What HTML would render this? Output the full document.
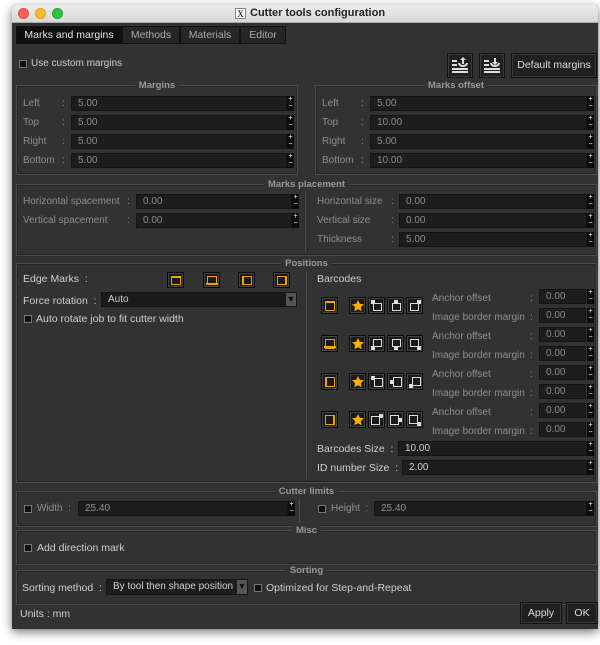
<!DOCTYPE html>
<html><head><meta charset="utf-8"><style>
*{box-sizing:border-box;margin:0;padding:0}
body{width:600px;height:645px;background:#fff;position:relative;overflow:hidden;font-family:"Liberation Sans",sans-serif;font-size:10px;color:#cfcfcf}
.win{position:absolute;left:12px;top:5px;width:586px;height:624px;background:#323232;box-shadow:0 3px 10px rgba(0,0,0,.55);border-radius:4px 4px 0 0;overflow:hidden}
.tb{position:absolute;left:0;top:0;width:586px;height:18px;background:linear-gradient(#ececec,#d8d8d8);border-bottom:1px solid #aaa}
.dot{position:absolute;top:3px;width:11px;height:11px;border-radius:50%}
.a{position:absolute;white-space:nowrap}
.g{position:absolute;border:1px solid #4c4c4c;box-shadow:inset 0 0 0 1px #262626}
.gt{position:absolute;top:-6px;left:0;right:0;text-align:center;font-weight:bold;color:#999;font-size:9.5px}
.gt span{background:#323232;padding:0 4px}
.in{position:absolute;height:15px;background:#1d1d1d;border:1px solid #141414;color:#8c8c8c;padding-left:6px;line-height:13px;font-size:10px}
.in.en{color:#d0d0d0}
.sp{position:absolute;width:7px;height:15px;background:#0c0c0c;color:#bbb;font-size:7px;line-height:7px;text-align:center;font-weight:bold}
.dl{color:#8e8e8e}
.cb{position:absolute;width:8px;height:8px;background:#111;border:1px solid #777}
.btn{position:absolute;background:#202020;border:1px solid #111;box-shadow:inset 0 0 0 1px #3a3a3a;color:#ddd;text-align:center}
.ib{position:absolute;width:17px;height:16px;background:#1a1a1a;border:1px solid #0a0a0a;box-shadow:inset 0 0 0 1px #444}
.ib svg{position:absolute;left:2px;top:2px}
.tab{position:absolute;top:21px;height:18px;background:#262626;border:1px solid #111;color:#aaa;text-align:center;line-height:16px;font-size:10.5px}
</style></head><body>
<div class="win">
<div class="tb">
<div class="dot" style="left:6px;background:#fc5f57;border:1px solid #de4a42"></div>
<div class="dot" style="left:23px;background:#fdbc2e;border:1px solid #dea224"></div>
<div class="dot" style="left:40px;background:#28c840;border:1px solid #1fa832"></div>
<div class="a" style="left:223px;top:3px;width:11px;height:11px;background:#fff;border:1px solid #888;font-size:9px;line-height:10px;text-align:center;color:#000;font-family:'Liberation Serif',serif">X</div>
<div class="a" style="left:238px;top:2px;font-weight:bold;color:#222;font-size:11px">Cutter tools configuration</div>
</div>
<div class="tab" style="left:4px;width:106px;background:#0e0e0e;color:#e6e6e6">Marks and margins</div>
<div class="tab" style="left:110px;width:58px">Methods</div>
<div class="tab" style="left:168px;width:60px">Materials</div>
<div class="tab" style="left:228px;width:46px">Editor</div>

<div class="cb" style="left:7px;top:55px"></div><div class="a" style="left:19px;top:53px">Use custom margins</div>
<div class="btn" style="left:435px;top:48px;width:26px;height:25px"><svg width="24" height="22" viewBox="0 0 24 22"><g fill="#ddd"><rect x="4" y="6" width="5" height="2"/><rect x="4" y="10" width="5" height="2"/><rect x="4" y="14" width="16" height="2"/><rect x="4" y="17" width="16" height="2"/><path d="M10 9a5 4 0 0 0 10 0h-2a3 2 0 0 1-6 0z"/><path d="M15 3l3 3h-2v4h-2V6h-2z"/></g></svg></div>
<div class="btn" style="left:467px;top:48px;width:26px;height:25px"><svg width="24" height="22" viewBox="0 0 24 22"><g fill="#ddd"><rect x="4" y="6" width="5" height="2"/><rect x="4" y="10" width="5" height="2"/><rect x="4" y="14" width="16" height="2"/><rect x="4" y="17" width="16" height="2"/><path d="M10 9a5 4 0 0 0 10 0h-2a3 2 0 0 1-6 0z"/><path d="M15 11l3-3h-2V4h-2v4h-2z"/></g></svg></div>
<div class="btn" style="left:499px;top:48px;width:86px;height:25px;line-height:23px;font-size:10.5px">Default margins</div>

<div class="g" style="left:4px;top:80px;width:282px;height:90px"><div class="gt"><span>Margins</span></div></div>
<div class="g" style="left:303px;top:80px;width:282px;height:90px"><div class="gt"><span>Marks offset</span></div></div>

<div class="a dl" style="left:11px;top:93px">Left</div><div class="a dl" style="left:50px;top:93px">:</div>
<div class="a dl" style="left:11px;top:112px">Top</div><div class="a dl" style="left:50px;top:112px">:</div>
<div class="a dl" style="left:11px;top:131px">Right</div><div class="a dl" style="left:50px;top:131px">:</div>
<div class="a dl" style="left:11px;top:150px">Bottom</div><div class="a dl" style="left:50px;top:150px">:</div>
<div class="in" style="left:59px;top:91px;width:216px">5.00</div><div class="sp" style="left:275px;top:91px">+<br>−</div>
<div class="in" style="left:59px;top:110px;width:216px">5.00</div><div class="sp" style="left:275px;top:110px">+<br>−</div>
<div class="in" style="left:59px;top:129px;width:216px">5.00</div><div class="sp" style="left:275px;top:129px">+<br>−</div>
<div class="in" style="left:59px;top:148px;width:216px">5.00</div><div class="sp" style="left:275px;top:148px">+<br>−</div>

<div class="a dl" style="left:310px;top:93px">Left</div><div class="a dl" style="left:349px;top:93px">:</div>
<div class="a dl" style="left:310px;top:112px">Top</div><div class="a dl" style="left:349px;top:112px">:</div>
<div class="a dl" style="left:310px;top:131px">Right</div><div class="a dl" style="left:349px;top:131px">:</div>
<div class="a dl" style="left:310px;top:150px">Bottom</div><div class="a dl" style="left:349px;top:150px">:</div>
<div class="in" style="left:358px;top:91px;width:217px">5.00</div><div class="sp" style="left:575px;top:91px">+<br>−</div>
<div class="in" style="left:358px;top:110px;width:217px">10.00</div><div class="sp" style="left:575px;top:110px">+<br>−</div>
<div class="in" style="left:358px;top:129px;width:217px">5.00</div><div class="sp" style="left:575px;top:129px">+<br>−</div>
<div class="in" style="left:358px;top:148px;width:217px">10.00</div><div class="sp" style="left:575px;top:148px">+<br>−</div>

<div class="g" style="left:4px;top:179px;width:581px;height:72px"><div class="gt"><span>Marks placement</span></div></div>
<div class="a" style="left:293px;top:187px;width:1px;height:60px;background:#4c4c4c"></div>
<div class="a dl" style="left:11px;top:191px">Horizontal spacement</div><div class="a dl" style="left:115px;top:191px">:</div>
<div class="a dl" style="left:11px;top:210px">Vertical spacement</div><div class="a dl" style="left:115px;top:210px">:</div>
<div class="in" style="left:124px;top:189px;width:156px">0.00</div><div class="sp" style="left:280px;top:189px">+<br>−</div>
<div class="in" style="left:124px;top:208px;width:156px">0.00</div><div class="sp" style="left:280px;top:208px">+<br>−</div>
<div class="a dl" style="left:305px;top:191px">Horizontal size</div><div class="a dl" style="left:379px;top:191px">:</div>
<div class="a dl" style="left:305px;top:210px">Vertical size</div><div class="a dl" style="left:379px;top:210px">:</div>
<div class="a dl" style="left:305px;top:229px">Thickness</div><div class="a dl" style="left:379px;top:229px">:</div>
<div class="in" style="left:387px;top:189px;width:188px">0.00</div><div class="sp" style="left:575px;top:189px">+<br>−</div>
<div class="in" style="left:387px;top:208px;width:188px">0.00</div><div class="sp" style="left:575px;top:208px">+<br>−</div>
<div class="in" style="left:387px;top:227px;width:188px">5.00</div><div class="sp" style="left:575px;top:227px">+<br>−</div>

<div class="g" style="left:4px;top:258px;width:581px;height:220px"><div class="gt"><span>Positions</span></div></div>
<div class="a" style="left:294px;top:266px;width:1px;height:208px;background:#4c4c4c"></div>
<div class="a" style="left:11px;top:268px;font-size:10.5px">Edge Marks &nbsp;:</div>
<div class="ib" style="left:155px;top:267px"><svg width="12" height="11"><rect x="1.5" y="1.5" width="9" height="8" fill="none" stroke="#e8a200"/><rect x="1" y="1" width="10" height="2" fill="#f0a800"/></svg></div>
<div class="ib" style="left:191px;top:267px"><svg width="12" height="11"><rect x="1.5" y="1.5" width="9" height="8" fill="none" stroke="#e8a200"/><rect x="0" y="8" width="12" height="2" fill="#f0a800"/></svg></div>
<div class="ib" style="left:226px;top:267px"><svg width="12" height="11"><rect x="1.5" y="1.5" width="9" height="8" fill="none" stroke="#e8a200"/><rect x="1" y="1" width="2" height="9" fill="#f0a800"/></svg></div>
<div class="ib" style="left:261px;top:267px"><svg width="12" height="11"><rect x="1.5" y="1.5" width="9" height="8" fill="none" stroke="#e8a200"/><rect x="9" y="1" width="2" height="9" fill="#f0a800"/></svg></div>
<div class="a" style="left:11px;top:290px;font-size:10.5px">Force rotation &nbsp;:</div>
<div class="in en" style="left:89px;top:287px;width:196px;height:15px;background:#1a1a1a">Auto</div>
<div class="a" style="left:274px;top:288px;width:10px;height:13px;background:#555;color:#111;font-size:9px;text-align:center;line-height:12px">▼</div>
<div class="cb" style="left:12px;top:310px"></div><div class="a" style="left:24px;top:308px;font-size:10.5px">Auto rotate job to fit cutter width</div>

<div class="a" style="left:305px;top:268px;font-size:10.5px">Barcodes</div>

<div class="a" style="left:305px;top:438px;font-size:10.5px">Barcodes Size &nbsp;:</div>
<div class="in en" style="left:386px;top:436px;width:189px">10.00</div><div class="sp" style="left:575px;top:436px">+<br>−</div>
<div class="a" style="left:305px;top:457px;font-size:10.5px">ID number Size &nbsp;:</div>
<div class="in en" style="left:390px;top:455px;width:185px">2.00</div><div class="sp" style="left:575px;top:455px">+<br>−</div>

<div class="g" style="left:4px;top:486px;width:581px;height:36px"><div class="gt"><span>Cutter limits</span></div></div>
<div class="a" style="left:287px;top:494px;width:1px;height:24px;background:#4c4c4c"></div>
<div class="cb" style="left:12px;top:500px"></div><div class="a dl" style="left:25px;top:498px">Width &nbsp;:</div>
<div class="in" style="left:66px;top:496px;width:210px">25.40</div><div class="sp" style="left:276px;top:496px">+<br>−</div>
<div class="cb" style="left:306px;top:500px"></div><div class="a dl" style="left:319px;top:498px">Height &nbsp;:</div>
<div class="in" style="left:362px;top:496px;width:213px">25.40</div><div class="sp" style="left:575px;top:496px">+<br>−</div>

<div class="g" style="left:4px;top:525px;width:581px;height:35px"><div class="gt"><span>Misc</span></div></div>
<div class="cb" style="left:12px;top:539px"></div><div class="a" style="left:25px;top:537px;font-size:10.5px">Add direction mark</div>

<div class="g" style="left:4px;top:565px;width:581px;height:35px"><div class="gt"><span>Sorting</span></div></div>
<div class="a" style="left:10px;top:577px;font-size:10.5px">Sorting method &nbsp;:</div>
<div class="in en" style="left:94px;top:574px;width:142px;height:16px">By tool then shape position</div>
<div class="a" style="left:225px;top:575px;width:10px;height:14px;background:#555;color:#111;font-size:9px;text-align:center;line-height:13px">▼</div>
<div class="cb" style="left:242px;top:579px"></div><div class="a" style="left:254px;top:577px;font-size:10.5px">Optimized for Step-and-Repeat</div>

<div class="a" style="left:8px;top:603px;font-size:10.5px">Units : mm</div>
<div class="btn" style="left:508px;top:597px;width:42px;height:22px;line-height:20px;font-size:10.5px">Apply</div>
<div class="btn" style="left:554px;top:597px;width:32px;height:22px;line-height:20px;font-size:10.5px">OK</div>
</div>

<div style="position:absolute;left:0;top:0;width:600px;height:645px;pointer-events:none">
<style>
.r{position:absolute;left:0;width:600px;height:40px}
.r .ib{width:17px;height:17px}
.lb{position:absolute;color:#8e8e8e;font-size:10px;white-space:nowrap}
</style>
<div class="r" style="top:297px">
 <div class="ib" style="left:321px;top:0"><svg width="12" height="12"><rect x="1.5" y="1.5" width="9" height="9" fill="none" stroke="#e8a200"/><rect x="1" y="1" width="10" height="2" fill="#f0a800"/></svg></div>
 <div class="ib" style="left:349px;top:0"><svg width="12" height="12"><path d="M6 0l1.8 3.8 4.2.5-3.1 2.8.8 4.1L6 9.2 2.3 11.2l.8-4.1L0 4.3l4.2-.5z" fill="#f5b000"/></svg></div>
 <div class="ib" style="left:368px;top:0"><svg width="12" height="12"><rect x="2.5" y="3.5" width="8" height="7" fill="none" stroke="#ddd"/><rect x="0" y="0" width="4" height="4" fill="#ddd"/></svg></div>
 <div class="ib" style="left:387px;top:0"><svg width="12" height="12"><rect x="2.5" y="3.5" width="8" height="7" fill="none" stroke="#ddd"/><rect x="4" y="0" width="4" height="4" fill="#ddd"/></svg></div>
 <div class="ib" style="left:406px;top:0"><svg width="12" height="12"><rect x="1.5" y="3.5" width="8" height="7" fill="none" stroke="#ddd"/><rect x="8" y="0" width="4" height="4" fill="#ddd"/></svg></div>
 <div class="lb" style="left:432px;top:-4px">Anchor offset</div><div class="lb" style="left:530px;top:-4px">:</div>
 <div class="lb" style="left:432px;top:15px">Image border margin</div><div class="lb" style="left:530px;top:15px">:</div>
 <div class="in" style="left:539px;top:-8px;width:47px">0.00</div><div class="sp" style="left:587px;top:-8px">+<br>−</div>
 <div class="in" style="left:539px;top:11px;width:47px">0.00</div><div class="sp" style="left:587px;top:11px">+<br>−</div>
</div>
<div class="r" style="top:335px">
 <div class="ib" style="left:321px;top:0"><svg width="12" height="12"><rect x="1.5" y="1.5" width="9" height="9" fill="none" stroke="#e8a200"/><rect x="0" y="8" width="12" height="2" fill="#f0a800"/></svg></div>
 <div class="ib" style="left:349px;top:0"><svg width="12" height="12"><path d="M6 0l1.8 3.8 4.2.5-3.1 2.8.8 4.1L6 9.2 2.3 11.2l.8-4.1L0 4.3l4.2-.5z" fill="#f5b000"/></svg></div>
 <div class="ib" style="left:368px;top:0"><svg width="12" height="12"><rect x="2.5" y="1.5" width="8" height="7" fill="none" stroke="#ddd"/><rect x="0" y="8" width="4" height="4" fill="#ddd"/></svg></div>
 <div class="ib" style="left:387px;top:0"><svg width="12" height="12"><rect x="2.5" y="1.5" width="8" height="7" fill="none" stroke="#ddd"/><rect x="4" y="8" width="4" height="4" fill="#ddd"/></svg></div>
 <div class="ib" style="left:406px;top:0"><svg width="12" height="12"><rect x="1.5" y="1.5" width="8" height="7" fill="none" stroke="#ddd"/><rect x="8" y="8" width="4" height="4" fill="#ddd"/></svg></div>
 <div class="lb" style="left:432px;top:-4px">Anchor offset</div><div class="lb" style="left:530px;top:-4px">:</div>
 <div class="lb" style="left:432px;top:15px">Image border margin</div><div class="lb" style="left:530px;top:15px">:</div>
 <div class="in" style="left:539px;top:-8px;width:47px">0.00</div><div class="sp" style="left:587px;top:-8px">+<br>−</div>
 <div class="in" style="left:539px;top:11px;width:47px">0.00</div><div class="sp" style="left:587px;top:11px">+<br>−</div>
</div>
<div class="r" style="top:373px">
 <div class="ib" style="left:321px;top:0"><svg width="12" height="12"><rect x="1.5" y="1.5" width="9" height="9" fill="none" stroke="#e8a200"/><rect x="1" y="1" width="2" height="10" fill="#f0a800"/></svg></div>
 <div class="ib" style="left:349px;top:0"><svg width="12" height="12"><path d="M6 0l1.8 3.8 4.2.5-3.1 2.8.8 4.1L6 9.2 2.3 11.2l.8-4.1L0 4.3l4.2-.5z" fill="#f5b000"/></svg></div>
 <div class="ib" style="left:368px;top:0"><svg width="12" height="12"><rect x="3.5" y="2.5" width="8" height="8" fill="none" stroke="#ddd"/><rect x="0" y="0" width="4" height="4" fill="#ddd"/></svg></div>
 <div class="ib" style="left:387px;top:0"><svg width="12" height="12"><rect x="3.5" y="1.5" width="8" height="9" fill="none" stroke="#ddd"/><rect x="0" y="4" width="4" height="4" fill="#ddd"/></svg></div>
 <div class="ib" style="left:406px;top:0"><svg width="12" height="12"><rect x="3.5" y="1.5" width="8" height="8" fill="none" stroke="#ddd"/><rect x="0" y="8" width="4" height="4" fill="#ddd"/></svg></div>
 <div class="lb" style="left:432px;top:-4px">Anchor offset</div><div class="lb" style="left:530px;top:-4px">:</div>
 <div class="lb" style="left:432px;top:15px">Image border margin</div><div class="lb" style="left:530px;top:15px">:</div>
 <div class="in" style="left:539px;top:-8px;width:47px">0.00</div><div class="sp" style="left:587px;top:-8px">+<br>−</div>
 <div class="in" style="left:539px;top:11px;width:47px">0.00</div><div class="sp" style="left:587px;top:11px">+<br>−</div>
</div>
<div class="r" style="top:411px">
 <div class="ib" style="left:321px;top:0"><svg width="12" height="12"><rect x="1.5" y="1.5" width="9" height="9" fill="none" stroke="#e8a200"/><rect x="9" y="1" width="2" height="10" fill="#f0a800"/></svg></div>
 <div class="ib" style="left:349px;top:0"><svg width="12" height="12"><path d="M6 0l1.8 3.8 4.2.5-3.1 2.8.8 4.1L6 9.2 2.3 11.2l.8-4.1L0 4.3l4.2-.5z" fill="#f5b000"/></svg></div>
 <div class="ib" style="left:368px;top:0"><svg width="12" height="12"><rect x="0.5" y="2.5" width="8" height="8" fill="none" stroke="#ddd"/><rect x="8" y="0" width="4" height="4" fill="#ddd"/></svg></div>
 <div class="ib" style="left:387px;top:0"><svg width="12" height="12"><rect x="0.5" y="1.5" width="8" height="9" fill="none" stroke="#ddd"/><rect x="8" y="4" width="4" height="4" fill="#ddd"/></svg></div>
 <div class="ib" style="left:406px;top:0"><svg width="12" height="12"><rect x="0.5" y="1.5" width="8" height="8" fill="none" stroke="#ddd"/><rect x="8" y="8" width="4" height="4" fill="#ddd"/></svg></div>
 <div class="lb" style="left:432px;top:-4px">Anchor offset</div><div class="lb" style="left:530px;top:-4px">:</div>
 <div class="lb" style="left:432px;top:15px">Image border margin</div><div class="lb" style="left:530px;top:15px">:</div>
 <div class="in" style="left:539px;top:-8px;width:47px">0.00</div><div class="sp" style="left:587px;top:-8px">+<br>−</div>
 <div class="in" style="left:539px;top:11px;width:47px">0.00</div><div class="sp" style="left:587px;top:11px">+<br>−</div>
</div>
</div>
</body></html>
